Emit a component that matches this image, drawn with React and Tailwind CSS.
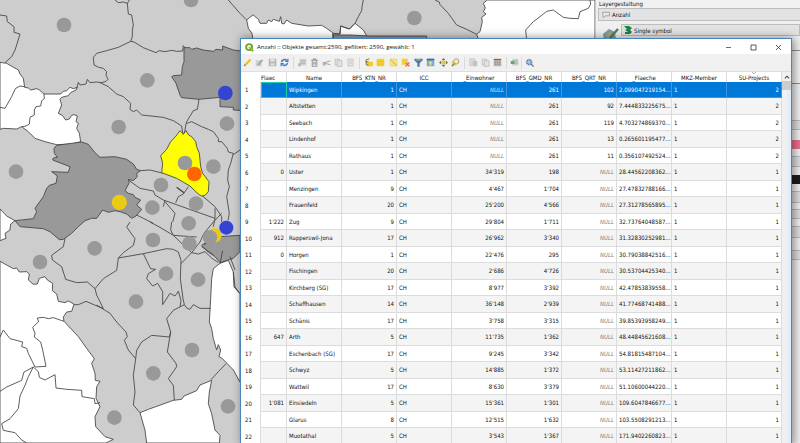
import React from "react";

const columns = [
  "Name", "BFS_KTN_NR", "ICC", "_Einwohner", "BFS_GMD_NR", "BFS_QRT_NR", "_Flaeche", "MKZ-Member", "SU-Projects",
];

// Flaec, Name, BFS_KTN_NR, _Einwohner, BFS_GMD_NR, BFS_QRT_NR, _Flaeche, SU-Projects
const rows = [
  ["", "Wipkingen", "1", null, "261", "102", "2.099047219154…", "2"],
  ["", "Altstetten", "1", null, "261", "92", "7.444833225675…", "2"],
  ["", "Seebach", "1", null, "261", "119", "4.703274869370…", "2"],
  ["", "Lindenhof", "1", null, "261", "13", "0.265601195477…", "2"],
  ["", "Rathaus", "1", null, "261", "11", "0.356107492524…", "2"],
  ["0", "Uster", "1", "34'319", "198", null, "28.44562208362…", "1"],
  ["", "Menzingen", "9", "4'467", "1'704", null, "27.47832788166…", "1"],
  ["", "Frauenfeld", "20", "25'200", "4'566", null, "27.31278565895…", "1"],
  ["1'222", "Zug", "9", "29'804", "1'711", null, "32.73764048587…", "1"],
  ["912", "Rapperswil-Jona", "17", "26'962", "3'340", null, "31.32830252981…", "1"],
  ["0", "Horgen", "1", "22'476", "295", null, "30.79038842516…", "1"],
  ["", "Fischingen", "20", "2'686", "4'726", null, "30.53704425340…", "1"],
  ["", "Kirchberg (SG)", "17", "8'977", "3'392", null, "42.47853839558…", "1"],
  ["", "Schaffhausen", "14", "36'148", "2'939", null, "41.77468741488…", "1"],
  ["", "Schänis", "17", "3'758", "3'315", null, "39.85393958249…", "1"],
  ["647", "Arth", "5", "11'735", "1'362", null, "48.44845621608…", "1"],
  ["", "Eschenbach (SG)", "17", "9'245", "3'342", null, "54.81815487104…", "1"],
  ["", "Schwyz", "5", "14'885", "1'372", null, "53.11427211862…", "1"],
  ["", "Wattwil", "17", "8'630", "3'379", null, "51.10600044220…", "1"],
  ["1'081", "Einsiedeln", "5", "15'361", "1'301", null, "109.6047846677…", "1"],
  ["", "Glarus", "8", "12'515", "1'632", null, "103.5508291213…", "1"],
  ["", "Muotathal", "5", "3'543", "1'367", null, "171.9402260823…", "1"],
];

const whiteAreas = [
  "M0,187 L20,190 55,210 60,222 70,235 74,262 85,264 92,270 110,266 118,270 132,282 182,282 190,274 200,272 210,262 220,266 232,262 228,270 212,278 205,287 185,292 180,298 185,315 175,340 187,346 197,360 208,357 215,346 222,344 232,348 228,365 235,370 230,385 238,400 242,425 215,432 170,434 135,425 105,415 85,395 65,380 50,387 10,385 0,388 Z",
  "M0,627 L20,648 45,662 32,672 30,690 15,700 18,715 0,722 Z",
  "M0,784 L20,795 40,806 50,804 58,816 80,815 88,822 85,840 100,853 112,852 118,835 135,830 142,840 158,850 157,872 170,882 175,904 195,908 205,903 222,912 215,934 200,936 190,951 192,964 235,1010 260,1045 283,1076 275,1090 285,1120 286,1141 300,1144 290,1160 288,1195 300,1220 285,1250 287,1280 315,1310 340,1318 318,1329 0,1329 Z",
  "M420,1238 L445,1228 520,1201 545,1198 552,1188 590,1172 600,1155 635,1141 628,1176 625,1211 635,1241 645,1290 660,1306 658,1329 440,1329 435,1291 Z",
  "M640,806 L660,790 685,781 700,816 702,861 720,881 V1146 L700,1110 680,1089 665,1074 657,1070 662,1050 655,1034 650,1050 640,1016 635,986 628,966 632,896 635,836 Z",
  "M740,60 L752,50 760,45 775,58 780,70 800,70 805,60 815,65 820,58 838,64 842,50 845,70 852,72 860,60 875,70 925,78 965,76 980,85 998,98 1000,130 H760 L756,100 745,85 Z",
  "M1000,130 L1000,102 1020,102 1022,78 1048,87 1065,70 1090,90 1110,125 Z",
  "M1462,0 L1450,10 1456,24 1450,35 1458,42 1445,52 1447,65 1440,95 1430,103 1440,130 H1785 V0 Z",
];

const darkAreas = [
  "M552,143 L570,143 575,148 590,144 610,150 640,154 648,148 668,150 668,138 700,150 740,155 V332 L700,330 700,322 660,320 660,292 597,298 545,293 540,285 528,250 515,230 520,227 545,225 547,200 552,185 Z",
  "M170,436 L215,430 245,426 265,433 285,458 300,472 345,470 380,478 400,492 410,508 422,512 410,520 412,530 400,542 385,538 388,548 375,572 385,580 400,584 405,592 422,600 410,615 425,628 415,640 408,648 395,655 380,642 360,635 345,632 325,637 308,630 290,655 275,655 255,662 235,680 215,700 190,718 178,719 150,695 130,686 60,680 45,662 100,656 110,635 105,625 130,590 140,565 148,556 168,550 172,528 155,515 205,517 210,500 158,480 160,474 172,472 163,460 162,445 Z",
  "M640,711 L720,706 V755 L700,775 660,788 645,770 620,752 605,736 Z",
  "M1000,105 H1050 L1110,108 1280,108 V130 H1000 Z",
];

const borderLines = [
  "M74,260 L60,258 46,266 35,290 15,325 0,322",
  "M132,282 L133,296 125,302 122,318 108,320 103,330 103,345 90,352 88,372 78,378 65,380",
  "M0,45 L20,48 22,65 42,80 42,97 60,102 50,135 45,150 35,170 15,188",
  "M345,0 L355,8 370,6 382,10 385,42 395,45 400,75 397,90 397,110 392,124 355,142 320,152 290,160 280,172 282,195 296,202 310,205 320,215 318,225 324,238 318,244 305,248 290,246 270,248 262,238 258,252 240,255 235,247 230,265",
  "M388,0 L382,10",
  "M392,124 L402,126 430,143 468,158 478,152 495,155 515,151 530,154 548,153 550,137 555,143",
  "M300,248 L325,260 350,282 370,290 392,310 390,328 400,335 410,330 425,345 490,352 520,362 545,378 548,398 553,402 558,372 560,365 580,332 592,328 597,298",
  "M560,370 L575,365 605,380 625,388 640,395 655,415 655,425 665,425 682,445 685,456 700,460 692,490 685,510 683,540 688,560 680,590 688,640 683,666",
  "M700,464 L720,450", "M685,0 L720,40 740,60",
  "M1090,0 L1086,20 1085,32 1075,50 1065,70 1048,87 1022,78 1020,102 1000,100",
  "M1305,0 L1318,6 1320,14 1345,40 1370,75 1400,88 1430,103",
  "M1580,120 L1577,90 1600,65 1620,50 1640,34 1660,30 1690,52 1710,55 1735,56 1740,35 1765,25 1772,12 1770,0",
  "M192,964 L160,953 145,956 130,952 112,954 116,965 98,982 105,1000 103,1011 122,1026 128,1050 138,1099 120,1100 105,1101 85,1060 80,1045 65,1040 68,1026 30,1016 10,990 0,1011",
  "M100,1101 L72,1116 65,1141 45,1150 20,1161 0,1174",
  "M100,1101 L85,1130 75,1156 60,1188 55,1226 30,1256 5,1271 10,1291 45,1298 65,1320 80,1329",
  "M100,1101 L115,1115 118,1132 135,1140 165,1124 168,1164 200,1168 245,1171 246,1190 283,1196 285,1211 300,1208",
  "M195,716 L190,740 155,766 157,780 185,800 197,838 230,848 262,846 285,866 290,885 310,926",
  "M310,926 L258,904 235,914 222,914", "M290,915 L330,940 350,966 378,996 382,1010 373,1021 385,1050 407,1076 400,1126 405,1176 400,1215 420,1238",
  "M285,866 L310,836 350,811 355,774 370,758 400,736 405,716 380,681 390,666",
  "M355,774 L430,761 500,746 520,748 535,756 543,781 541,836 549,896 553,914 520,931 500,956 512,996 508,1011 455,1006 425,1026 410,1051 407,1076",
  "M430,761 L445,792 452,806 467,808 445,821 440,836 458,858 473,850 488,875 488,914 510,880 525,888 535,874 543,901 540,920",
  "M512,996 L502,1056 528,1090 530,1100 505,1136 520,1156 523,1201",
  "M553,914 L560,924 570,928 580,914 600,925 632,925", "M633,1139 L655,1115 678,1091",
  "M543,791 L575,758 600,726 612,700 640,666 665,640", "M575,758 L595,762 615,755 635,774 655,788",
  "M450,666 L480,682 520,706 590,711", "M515,666 L512,690 520,706 550,735 575,758",
  "M422,512 L450,510 490,520", "M385,540 L420,565 460,573 465,585 490,600 645,655",
  "M495,600 L490,620 M495,605 L525,640 518,666", "M527,608 L535,590 550,582 565,560",
  "M570,558 L610,590 645,620 665,650 665,666", "M645,655 L645,625 M645,655 640,680",
  "M410,645 L430,655 460,670", "M660,790 L668,752 M690,770 L705,810 M640,711 612,735 M605,740 L640,765",
  "M700,816 L705,861 720,881",
];

const greyDots = [
  [192, 75], [573, 0], [442, 241], [356, 381], [681, 371], [48, 515], [555, 489], [640, 500], [483, 555], [588, 611],
  [457, 623], [566, 670], [120, 786], [284, 745], [459, 720], [498, 821], [594, 839], [408, 905], [576, 1050],
  [460, 1120], [343, 1253], [684, 1219], [568, 731], [630, 712], [1243, 54],
];

function MapCanvas() {
  return (
    <svg viewBox="0 0 1785 1329" preserveAspectRatio="xMinYMin slice" className="h-full w-full" role="img">
      <rect width="1785" height="1329" fill="#cdcdcd" />
      <g stroke="#444" strokeWidth="2.6" strokeLinejoin="round" fill="none">
        {whiteAreas.map((d) => <path key={d} d={d} fill="#fff" />)}
        {darkAreas.map((d) => <path key={d} d={d} fill="#999" />)}
        {borderLines.map((d) => <path key={d} d={d} />)}
        <path d="M530,562 L552,578" strokeWidth="4" />
        <path
          fill="#ffff00"
          d="M540,392 L550,403 558,392 566,405 575,410 587,425 590,440 598,460 602,500 608,520 627,545 625,575 615,586 605,588 595,582 570,558 530,535 485,518 488,490 482,467 500,448 512,425 525,412 Z"
        />
      </g>
      <circle cx="643" cy="706" r="22" fill="#ebcb14" />
      {greyDots.map(([x, y]) => <circle key={`${x}-${y}`} cx={x} cy={y} r="22" fill="#999" />)}
      <circle cx="583" cy="522" r="22" fill="#ff6600" />
      <circle cx="358" cy="607" r="23" fill="#ebcb14" />
      <circle cx="676" cy="279" r="22" fill="#3344d0" />
      <circle cx="679" cy="683" r="23" fill="#b4b9ea" />
      <circle cx="679" cy="683" r="21" fill="#3344d0" />
    </svg>
  );
}

const glyphs = {
  pencil: <><path d="M1.5 10.5 2.5 7.5 9 1l2 2-6.5 6.5z" fill="#e8c02c" /><path d="M1 11l1.2-3 1.8 2z" fill="#777" /></>,
  multiEdit: <><path d="M1 3h8v8H1z" fill="#cfcfcf" /><path d="M3 9 9 2l2 1-6 7z" fill="#a0a0a0" /></>,
  save: <><path d="M1 1h10v10H1z" fill="#b2b2b2" /><path d="M3 1h6v4H3zM3 7h6v3H3z" fill="#e0e0e0" /></>,
  reload: <g fill="none" stroke="#3a7fc4" strokeWidth="2"><path d="M2 5.5a4 4 0 0 1 7-2M10 6.5a4 4 0 0 1-7 2" /><path d="M10.5 1v3.5H7M1.5 11V7.500H5" strokeWidth="1.600" /></g>,
  addRow: <><path d="M2 1h9v9H2z" fill="#d0d0d0" /><path d="M3 4h7M3 7h7" stroke="#aaa" /><path d="M0 7h4v4H0z" fill="#bbb" /></>,
  trash: <g fill="none" stroke="#999" strokeWidth="1.400"><path d="M1.500 3h9M4.500 3V1.500h3V3M3 3v8h6V3M5 5v4M7 5v4" /></g>,
  cut: <g fill="none" stroke="#aaa" strokeWidth="1.400"><path d="M4 6 11 4M4 7 11 9M1 6h3" /><circle cx="3" cy="8" r="1.500" /></g>,
  copy: <g fill="#e2e2e2" stroke="#bbb"><path d="M1.500 1.500h6v8h-6z" /><path d="M4.500 3.500h6v8h-6z" /></g>,
  paste: <g fill="#e2e2e2" stroke="#c0c0c0"><path d="M2.500 1.500h7v9h-7z" /><path d="M4.500 4.500h3M4.500 7h3" /></g>,
  expression: <><path d="M4 5h8v6H4z" fill="#f2cf27" /><path d="M7 1 3 2.500v6L6 10M1.500 5H6" fill="none" stroke="#8a7a3a" strokeWidth="1.400" /></>,
  selectAll: <><path d="M1 1h10v10H1z" fill="#f3d02a" /><path d="M1 4.500h10M1 8h10" stroke="#e2bd1c" /></>,
  invert: <><path d="M1.500 1.500h9v9h-9z" fill="#f8e780" stroke="#e6d060" /><path d="M2 2l8 8" stroke="#d8c252" strokeWidth="1.500" /></>,
  deselect: <><path d="M1 1h8v8H1z" fill="#f3d02a" /><path d="M5.500 5.500h6v6h-6z" fill="#f5c1b0" /><path d="M6 6l5 5M11 6l-5 5" stroke="#dc5a3b" strokeWidth="1.400" /></>,
  filter: <><path d="M.5 1h11v2L7.500 7v4.500h-3V7L.5 3z" fill="#4a76ac" /><path d="M3 2.500h6" stroke="#cbb560" strokeWidth="1.500" /></>,
  moveTop: <><path d="M1 1h10v10H1z" fill="#7fa8cf" /><path d="M1 2h10" stroke="#3b699c" strokeWidth="2" /><path d="M6 4 3 7h2v3h2V7h2z" fill="#f5e27a" /></>,
  pan: <><path d="M6 0l2.500 3h-5zM6 12l2.500-3h-5zM0 6l3-2.500v5zM12 6 9 3.500v5z" fill="#65704a" /><path d="M4 4h4v4H4z" fill="#e6cb28" /></>,
  zoom: <><path d="M1 4h6v6H1z" fill="#f0d34c" /><circle cx="7" cy="4.500" r="3.500" fill="#f6eda5" stroke="#999" strokeWidth="1.200" /><path d="M4.500 7.500 1 11" stroke="#777" strokeWidth="1.500" /></>,
  newField: <><path d="M1 1h7v9H1z" fill="#dadada" stroke="#c4c4c4" /><path d="M5 4h6v7H5z" fill="#c4c4c4" /></>,
  calc: <><path d="M1 1h10v10H1z" fill="#b9b4ac" /><path d="M1 2h10" stroke="#b65344" strokeWidth="1.600" /><path d="M3 5v5M6 5v5M9 5v5" stroke="#918b86" strokeDasharray="1.500 1" strokeWidth="1.500" /></>,
  format: <><path d="M3 1h8v9H3z" fill="#c9d2cf" /><path d="M3 4h8M3 7h8" stroke="#9faba8" /><path d="M1 4h5v4H1z" fill="#63a963" /></>,
  gear: <><circle cx="5.500" cy="5.500" r="3.300" fill="#a9c6de" stroke="#5283ae" strokeWidth="2.200" strokeDasharray="1.700 .7" /><path d="M8 8l3.500 3.500" stroke="#7d7d7d" strokeWidth="1.800" /></>,
};

const toolGroups = [
  ["w-[50px]", [["pencil", "Bearbeiten"], ["multiEdit", "Mehrfachbearbeitung"], ["save", "Speichern"], ["reload", "Neu laden"]]],
  ["w-[61px]", [["addRow", "Objekt hinzufügen"], ["trash", "Löschen"], ["cut", "Ausschneiden"], ["copy", "Kopieren"], ["paste", "Einfügen"]]],
  ["w-[100px]", [["expression", "Mit Ausdruck wählen"], ["selectAll", "Alles wählen"], ["invert", "Auswahl umkehren"], ["deselect", "Auswahl aufheben"], ["filter", "Filtern"], ["moveTop", "Auswahl nach oben"], ["pan", "Zur Auswahl verschieben"], ["zoom", "Zur Auswahl zoomen"]]],
  ["w-[37px]", [["newField", "Neues Feld"], ["copy", "Feld löschen"], ["calc", "Feldrechner"]]],
  ["w-[10px]", [["format", "Bedingte Formatierung"]]],
  ["w-[11px]", [["gear", "Aktionen"]]],
];

function Toolbar() {
  return (
    <div className="flex h-[17px] items-center bg-[#f0f0f0]">
      {toolGroups.map(([width, tools], i) => (
        <React.Fragment key={width}>
          {i > 0 && <span className="mx-0.5 h-3 w-px bg-[#dadada]" />}
          <div className={`flex ${width}`}>
            {tools.map(([glyph, label]) => (
              <button key={label} aria-label={label} className="flex flex-1 justify-center">
                <svg viewBox="0 0 12 12" className="size-[9px] shrink-0">{glyphs[glyph]}</svg>
              </button>
            ))}
          </div>
        </React.Fragment>
      ))}
    </div>
  );
}

function Cell({ value, align = "text-right", selected, className = "" }) {
  return (
    <td className={`overflow-hidden border-r border-b px-0.5 ${align} ${selected ? "border-[#3f94dd] bg-[#0078d7] text-white" : "border-[#dcdcdc]"} ${className}`}>
      {value === null ? <i className={selected ? "text-[#c8e2f8]" : "text-[#808080]"}>NULL</i> : value}
    </td>
  );
}

function AttributeTable() {
  return (
    <table className="w-full table-fixed border-separate border-spacing-0 text-[6px] leading-[12px] whitespace-nowrap text-[#111]">
      <colgroup>
        <col className="w-5" />
        <col className="w-[26px]" />
        {columns.map((c) => <col key={c} />)}
      </colgroup>
      <thead>
        <tr className="h-[10px] leading-[9px]">
          <th aria-label="Zeile" />
          <th className="overflow-hidden border-r border-[#dcdcdc] text-left font-normal">Flaec</th>
          {columns.map((c) => (
            <th key={c} className="relative border-r border-[#dcdcdc] text-center font-normal">
              {c}
              {c === "SU-Projects" && (
                <svg viewBox="0 0 6 3" className="absolute inset-x-0 top-0 mx-auto h-0.5 w-1"><path d="M0 0l3 3 3-3" fill="none" stroke="#888" /></svg>
              )}
            </th>
          ))}
        </tr>
      </thead>
      <tbody>
        {rows.map(([flaec, name, ktn, einwohner, gmd, qrt, flaeche, projects], i) => {
          const selected = i === 0;
          return (
            <tr key={name} className="odd:h-4 odd:bg-white even:h-[17px] even:bg-[#f4f4f4]">
              <th scope="row" className="border-r border-[#dcdcdc] bg-white pl-1 text-left font-normal">{i + 1}</th>
              <Cell value={flaec} selected={selected} className={selected ? "outline-1 -outline-offset-1 outline-[#18d3a0]" : ""} />
              <Cell value={name} selected={selected} align="text-left" />
              <Cell value={ktn} selected={selected} />
              <Cell value="CH" selected={selected} align="text-left" />
              <Cell value={einwohner} selected={selected} />
              <Cell value={gmd} selected={selected} />
              <Cell value={qrt} selected={selected} />
              <Cell value={flaeche} selected={selected} align="text-left" />
              <Cell value="1" selected={selected} align="text-left" />
              <Cell value={projects} selected={selected} />
            </tr>
          );
        })}
      </tbody>
    </table>
  );
}

function AttributeWindow() {
  return (
    <section className="absolute top-[38px] right-2 left-60 border border-[#4a86bd] bg-white shadow-[2px_0_9px_rgba(0,0,0,0.45)]">
      <header className="flex h-[15px] items-center pt-0.5 pl-1 text-[6px] text-[#111]">
        <svg viewBox="0 0 12 12" className="mr-[3px] size-[9px]">
          <circle cx="5.500" cy="5.500" r="4" fill="none" stroke="#6fa52b" strokeWidth="2.600" />
          <path d="M5.500 5.500l5.500 5.500" stroke="#87b93a" strokeWidth="2.600" />
          <path d="M5 5l2 2" stroke="#e8b03a" strokeWidth="1.500" />
        </svg>
        <h1 className="flex-1 font-['Open_Sans','Noto_Sans',sans-serif]">Anzahl :: Objekte gesamt:2590, gefiltert: 2590, gewählt: 1</h1>
        <div className="flex">
          <button aria-label="Minimieren" className="flex w-[25px] justify-center"><svg viewBox="0 0 7 7" className="size-[7px]"><path d="M1 3.500h5" stroke="#444" strokeWidth=".8" /></svg></button>
          <button aria-label="Maximieren" className="flex w-[25px] justify-center"><svg viewBox="0 0 7 7" className="size-[7px]"><path d="M1 1h5v5H1z" fill="none" stroke="#333" strokeWidth=".8" /></svg></button>
          <button aria-label="Schliessen" className="flex w-[25px] justify-center"><svg viewBox="0 0 7 7" className="size-[7px]"><path d="M1 1l5 5M6 1L1 6" stroke="#333" strokeWidth=".8" /></svg></button>
        </div>
      </header>
      <Toolbar />
      <div className="flex border-t border-[#dedede]">
        <div className="min-w-0 flex-1"><AttributeTable /></div>
        <div className="flex w-[9px] flex-col bg-[#f0f0f0]">
          <button aria-label="Nach oben" className="flex h-[9px] items-center justify-center">
            <svg viewBox="0 0 7 7" className="size-[6px]"><path d="M1 5l2.500-2.500L6 5" fill="none" stroke="#444" strokeWidth="1.200" /></svg>
          </button>
          <span className="h-[9px] bg-[#cdcdcd]" />
          <span className="ml-[5px] flex-1 bg-[#e2eefa]" />
        </div>
      </div>
    </section>
  );
}

function StylingPanel() {
  return (
    <aside className="w-[205px] overflow-hidden border-l border-[#c8c8c8] bg-[#f0f0f0] text-[6px] text-[#111]">
      <h2 className="h-2 pl-[3px] leading-[7px]">Layergestaltung</h2>
      <button className="ml-0.5 flex h-[13px] w-full items-center gap-0.5 border border-[#bdbdbd] bg-[#e3e3e3] pl-0.5">
        <svg viewBox="0 0 10 8" className="h-[7px] w-[9px]"><path d="M1.500 1.500h8v4h-5l-2 2z" fill="#e9e9e9" stroke="#888" strokeWidth=".8" /></svg>
        Anzahl
      </button>
      <div className="mt-[3px] flex gap-px pl-1.5">
        <svg viewBox="0 0 18 14" className="mt-[3px] h-[14px] w-[18px]">
          <path d="M1 7l6-5 6 3 1 8H2z" fill="#7d99ab" /><path d="M3 9l5-4 3 5-4 4z" fill="#b5a968" /><path d="M8 11l8-9" stroke="#577f55" strokeWidth="2.500" />
        </svg>
        <button className="flex h-[12px] flex-1 items-center gap-0.5 border border-[#bdbdbd] bg-[#e3e3e3] pl-0.5">
          <svg viewBox="0 0 8 8" className="size-2"><path d="M0 0h5l3 2-2 2 2 2-2 2H1V6h3L1 4l2-1z" fill="#168548" /></svg>
          Single symbol
        </button>
      </div>
      <div className="mt-[9px] h-[34px] border-y border-[#8e8e8e] bg-[#f3f3f3]" />
      <div className="mt-[30px] flex flex-col">
        <span className="mt-[6px] h-[10px] border-y border-[#bbb] bg-[#dedede]" />
        <span className="mt-[10px] h-[9px] bg-[#ec6f8d]" />
        <span className="mt-[7px] h-[11px] border-y border-[#bbb] bg-[#dedede]" />
        <span className="mt-[8px] h-[9px] bg-[#1c1c1c]" />
        <span className="mt-[7px] h-[12px] border-y border-[#bbb] bg-[#dedede]" />
        <span className="mt-[6px] h-[10px] border-y border-[#bbb] bg-[#dedede]" />
        <span className="mt-[7px] h-[12px] border-y border-[#bbb] bg-[#dedede]" />
        <span className="mt-[12px] h-[10px] border-y border-[#bbb] bg-[#dedede]" />
      </div>
    </aside>
  );
}

export default function App() {
  return (
    <main className="relative flex h-screen overflow-hidden font-['DejaVu_Sans_Condensed','Open_Sans','Noto_Sans',sans-serif]">
      <div className="min-w-0 flex-1 overflow-hidden"><MapCanvas /></div>
      <StylingPanel />
      <AttributeWindow />
    </main>
  );
}
